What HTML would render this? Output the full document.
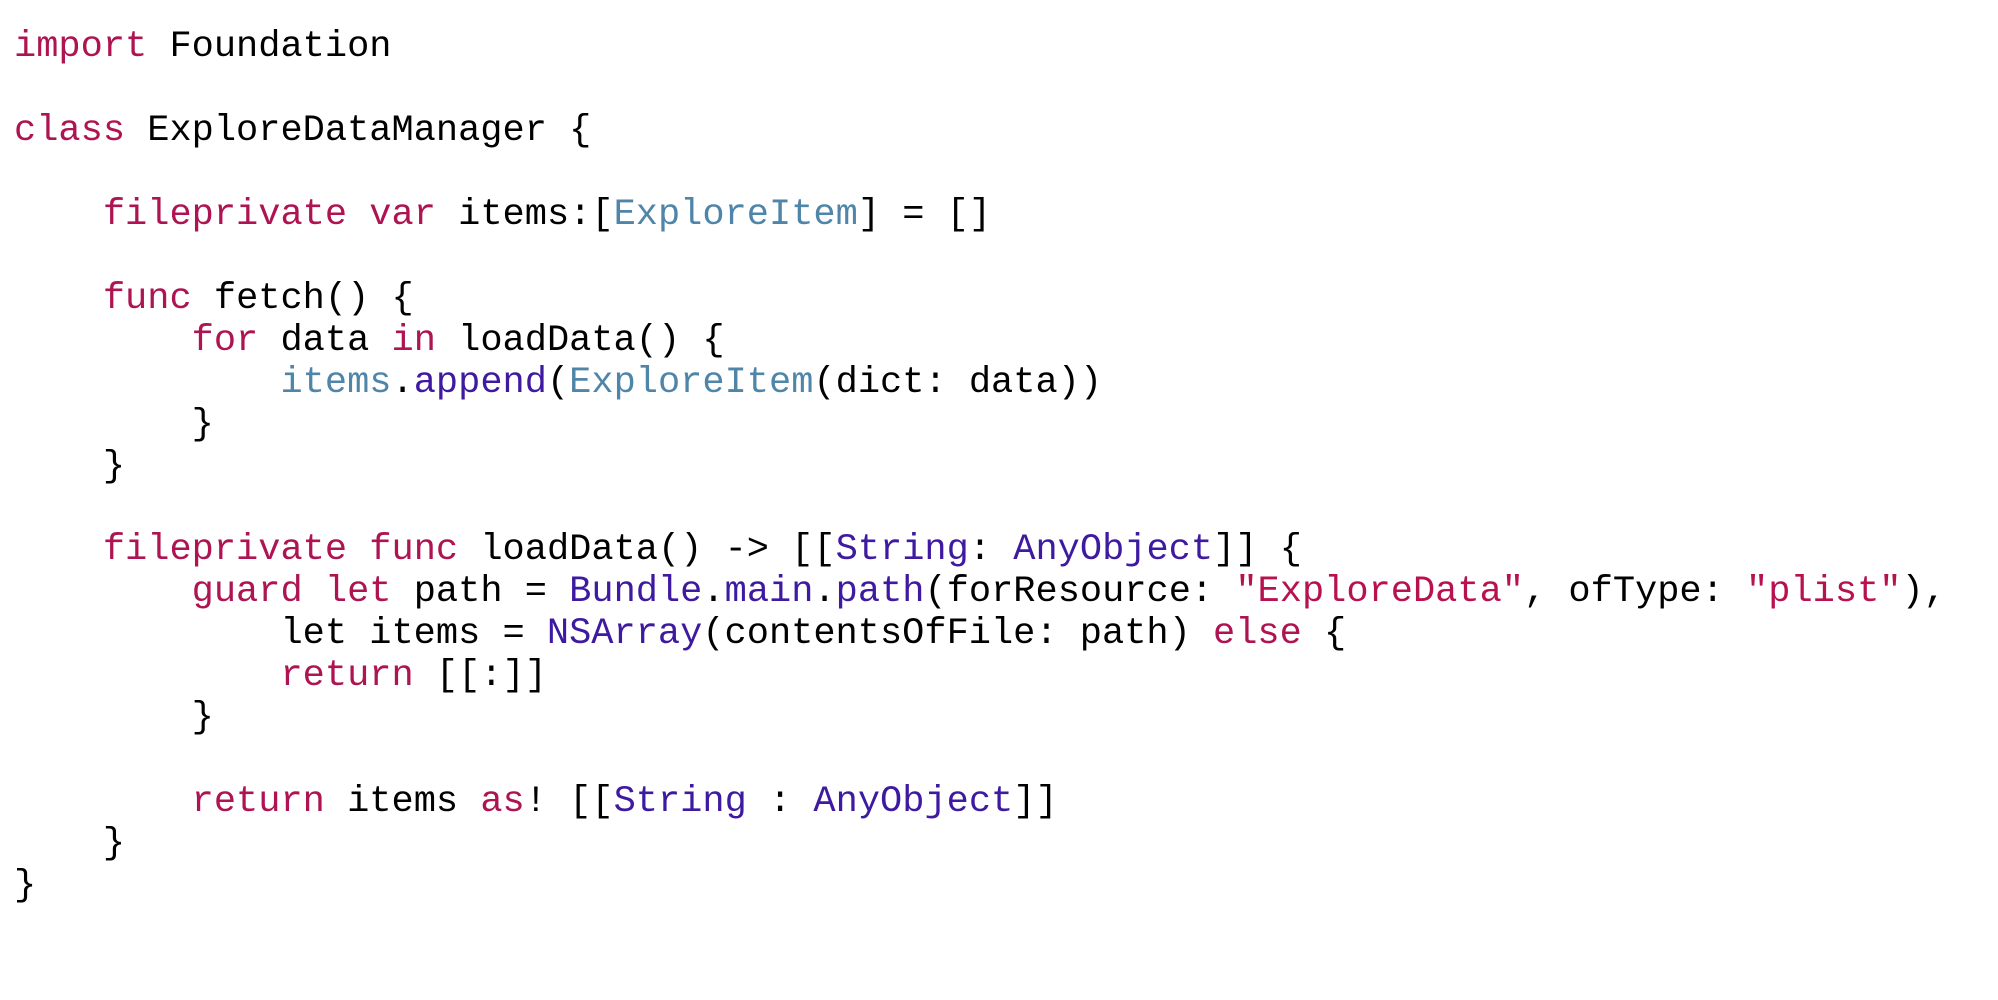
<!DOCTYPE html>
<html><head><meta charset="utf-8"><style>
html,body{margin:0;padding:0;background:#fff;width:1998px;height:1000px;overflow:hidden}
pre{margin:0;position:absolute;left:14px;top:27px;font-family:"Liberation Mono",monospace;font-size:37px;line-height:41.95px;color:#000;letter-spacing:0}
.k{color:#AE1352}.t{color:#4F85A8}.p{color:#3E1AA0}.s{color:#B8114F}
</style></head><body>
<pre><span class="k">import</span> Foundation

<span class="k">class</span> ExploreDataManager {

    <span class="k">fileprivate</span> <span class="k">var</span> items:[<span class="t">ExploreItem</span>] = []

    <span class="k">func</span> fetch() {
        <span class="k">for</span> data <span class="k">in</span> loadData() {
            <span class="t">items</span>.<span class="p">append</span>(<span class="t">ExploreItem</span>(dict: data))
        }
    }

    <span class="k">fileprivate</span> <span class="k">func</span> loadData() -&gt; [[<span class="p">String</span>: <span class="p">AnyObject</span>]] {
        <span class="k">guard</span> <span class="k">let</span> path = <span class="p">Bundle</span>.<span class="p">main</span>.<span class="p">path</span>(forResource: <span class="s">"ExploreData"</span>, ofType: <span class="s">"plist"</span>),
            let items = <span class="p">NSArray</span>(contentsOfFile: path) <span class="k">else</span> {
            <span class="k">return</span> [[:]]
        }

        <span class="k">return</span> items <span class="k">as</span>! [[<span class="p">String</span> : <span class="p">AnyObject</span>]]
    }
}
</pre>
</body></html>
